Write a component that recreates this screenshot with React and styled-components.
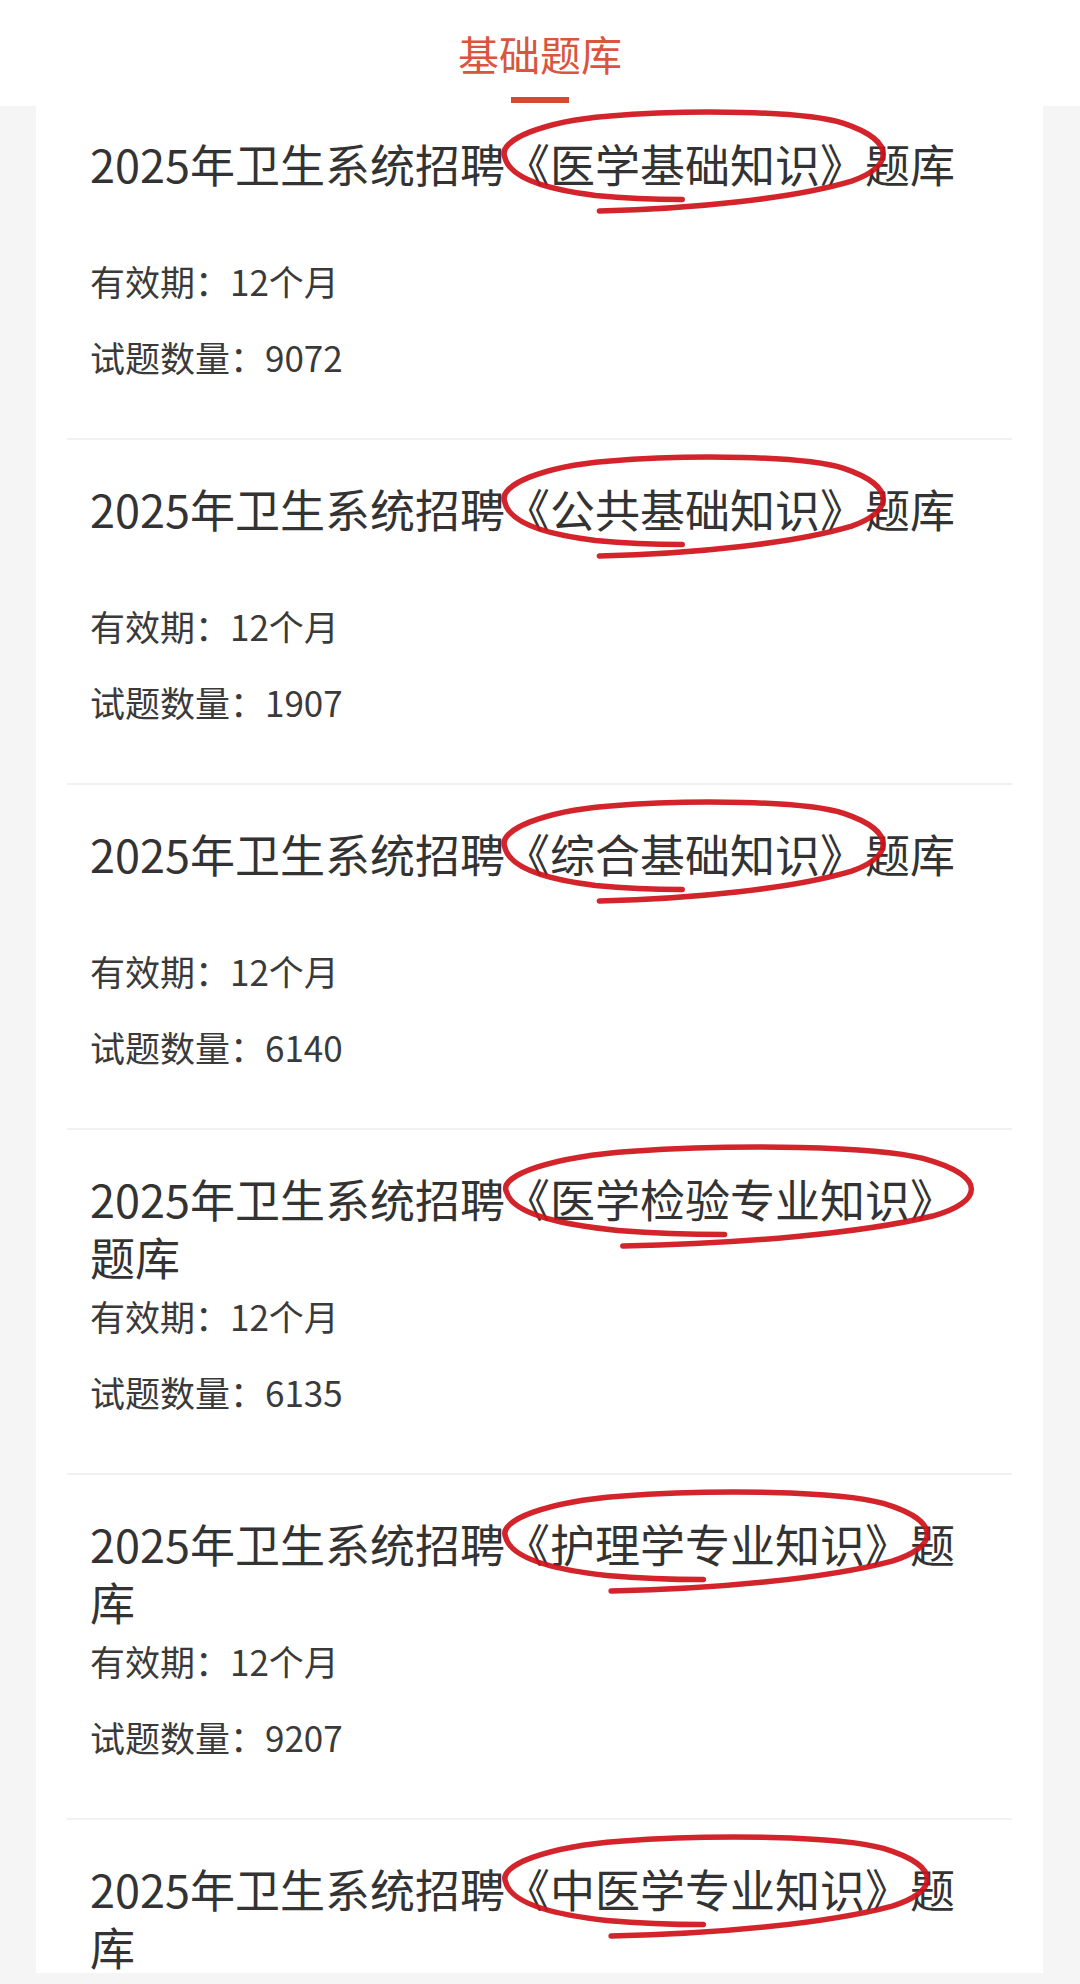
import React from 'react';
import styled, { createGlobalStyle } from 'styled-components';

const GlobalStyle = createGlobalStyle`
  html, body {
    margin: 0;
    padding: 0;
    background: #f5f5f5;
    font-family: "Noto Sans CJK SC", "Noto Sans", sans-serif;
  }
`

const Page = styled.div`
  height: 1984px;
  display: flex;
  flex-direction: column;
  overflow: hidden;
  background: #f5f5f5;
`

const Header = styled.div`
  background: #ffffff;
  height: 106px;
  box-sizing: border-box;
  padding-top: 30px;
  display: flex;
  flex-direction: column;
  align-items: center;
  flex-shrink: 0;
`

const HeaderTitle = styled.div`
  font-size: 41px;
  line-height: 46px;
  color: #d9553e;
`

const HeaderBar = styled.div`
  margin-top: 21px;
  width: 58px;
  height: 6px;
  background: #d64a33;
`

const Card = styled.div`
  flex: 1;
  min-height: 0;
  overflow: hidden;
  margin: 0 37px 11px 36px;
  background: #ffffff;
`

const List = styled.div`
  padding: 0 31px;
`

const Item = styled.div`
  padding: 40px 23px 51px;
  border-bottom: 2px solid #f1f1f1;

  &:first-child {
    padding-top: 29px;
  }
`

const Title = styled.div`
  font-size: 45px;
  line-height: 58px;
  height: 116px;
  max-width: 880px;
  color: #333333;
`

const Mark = styled.span`
  position: relative;
`

const Circle = styled.svg`
  position: absolute;
  left: -8px;
  top: -20px;
  width: calc(100% + 34px);
  height: calc(100% + 38px);
  overflow: visible;
  pointer-events: none;
`

const Meta = styled.div`
  font-size: 35px;
  line-height: 60px;
  color: #3a3a3a;

  & + & {
    margin-top: 16px;
  }
`

const banks = [
  { name: '医学基础知识', count: 9072 },
  { name: '公共基础知识', count: 1907 },
  { name: '综合基础知识', count: 6140 },
  { name: '医学检验专业知识', count: 6135 },
  { name: '护理学专业知识', count: 9207 },
  { name: '中医学专业知识', count: 0 },
]

// hand drawn red loop round the book name
const RedLoop = () => (
  <Circle viewBox="0 0 100 100" preserveAspectRatio="none">
    <path
      d="M26 97 C50 95, 75 85, 90 68 C100 55, 102 30, 88 12 C78 0, 50 -2, 28 5 C12 10, 0 28, 2 45 C3 62, 10 75, 25 82 C33 85, 40 86, 47 86"
      fill="none"
      stroke="#cf1219"
      strokeWidth="5.5"
      strokeLinecap="round"
      vectorEffect="non-scaling-stroke"
      opacity="0.92"
    />
  </Circle>
)

const App = () => {
  return (
    <Page>
      <GlobalStyle />
      <Header>
        <HeaderTitle>基础题库</HeaderTitle>
        <HeaderBar />
      </Header>
      <Card>
        <List>
          {banks.map(bank => (
            <Item key={bank.name}>
              <Title>
                2025年卫生系统招聘<Mark>《{bank.name}》<RedLoop /></Mark>题库
              </Title>
              <Meta>有效期：12个月</Meta>
              <Meta>试题数量：{bank.count}</Meta>
            </Item>
          ))}
        </List>
      </Card>
    </Page>
  )
}

export default App
